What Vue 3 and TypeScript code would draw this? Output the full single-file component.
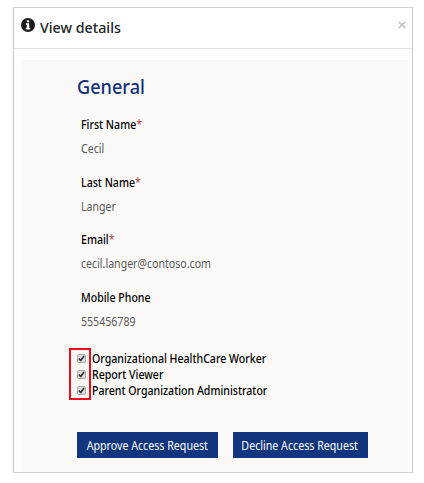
<script setup lang="ts">
import { ref } from 'vue'

interface Field {
  key: string
  label: string
  value: string
  required: boolean
}

const fields: Field[] = [
  { key: 'first', label: 'First Name', value: 'Cecil', required: true },
  { key: 'last', label: 'Last Name', value: 'Langer', required: true },
  { key: 'email', label: 'Email', value: 'cecil.langer@contoso.com', required: true },
  { key: 'phone', label: 'Mobile Phone', value: '555456789', required: false },
]

const roles = ref([
  { key: 'worker', label: 'Organizational HealthCare Worker', checked: true },
  { key: 'viewer', label: 'Report Viewer', checked: true },
  { key: 'admin', label: 'Parent Organization Administrator', checked: true },
])
</script>

<template>
  <div class="dialog">
    <header class="header">
      <svg class="info" viewBox="0 0 14 14" aria-hidden="true">
        <circle cx="7" cy="7" r="7" fill="#1b1b1b" />
        <path d="M5.8 2.2h2.4v2H5.8zM4.9 5.3h3.3v4.5h1v1.6H4.8V9.8h1V6.9h-.9z" fill="#fff" />
      </svg>
      <h1 class="title">View details</h1>
      <button class="close" type="button" aria-label="Close">
        <svg viewBox="0 0 8 8"><path d="M.7.9l6.6 6.2M7.3.9L.7 7.1" stroke="#c6c6c6" stroke-width="1.9" /></svg>
      </button>
    </header>
    <main class="panel">
      <h2 class="heading">General</h2>
      <div v-for="f in fields" :key="f.key" class="field">
        <div class="label">{{ f.label }}<span v-if="f.required" class="star">*</span></div>
        <div class="value">{{ f.value }}</div>
      </div>
      <div class="roles">
        <label v-for="r in roles" :key="r.key" class="role">
          <input v-model="r.checked" class="native" type="checkbox" />
          <span class="box">
            <svg v-if="r.checked" viewBox="0 0 9 9"><path d="M1.9 4.6l1.8 1.9L7 2" fill="none" stroke="#333" stroke-width="1.7" /></svg>
          </span>
          <span class="role-name">{{ r.label }}</span>
        </label>
        <div class="highlight"></div>
      </div>
      <div class="actions">
        <button class="btn approve" type="button"><span class="btn-text">Approve Access Request</span></button>
        <button class="btn decline" type="button"><span class="btn-text">Decline Access Request</span></button>
      </div>
    </main>
  </div>
</template>

<style>
body {
  background: #fff;
}
</style>

<style scoped>
.dialog {
  box-sizing: border-box;
  width: 400px;
  height: 466px;
  margin: 7px 0 0 13px;
  border: 1px solid #c8c8c8;
  border-top-color: #d2d2d2;
  border-bottom-color: #d2d2d2;
  background: #fff;
  font-family: "Noto Sans", "Open Sans", sans-serif;
  font-size: 12px;
  color: #111;
}
.header {
  display: flex;
  box-sizing: border-box;
  height: 41px;
  padding: 10px 6px 0 7px;
  border-bottom: 1px solid #e3e3e3;
}
.info {
  width: 14px;
  height: 14px;
}
.title {
  margin: -1px 0 0 5px;
  font-size: 15px;
  line-height: 20px;
  font-weight: 500;
  color: #222;
  white-space: nowrap;
  transform: scaleX(0.95);
  transform-origin: 0 50%;
}
.close {
  width: 8px;
  height: 8px;
  margin: 2.5px 0 0 auto;
  padding: 0;
  border: 0;
  background: none;
}
.close svg {
  display: block;
  width: 8px;
  height: 8px;
}
.panel {
  box-sizing: border-box;
  height: 412px;
  margin: 11px 4px 0 7px;
  padding: 15px 0 0 55.5px;
  background: #faf9f8;
}
.heading {
  margin: 0 0 12px;
  font-size: 19.5px;
  line-height: 24px;
  font-weight: 500;
  color: #10307a;
  transform: scaleX(0.93);
  transform-origin: 0 50%;
}
.field {
  height: 57.7px;
  padding-left: 4px;
  white-space: nowrap;
}
.label,
.value,
.role-name {
  transform: scaleX(0.882);
  transform-origin: 0 50%;
}
.label {
  height: 25px;
  line-height: 27px;
  font-weight: 500;
  color: #000;
}
.star {
  font-weight: 400;
  color: #b0494c;
}
.value {
  line-height: 25px;
  color: #5a5a5a;
}
.roles {
  position: relative;
  padding-top: 9px;
}
.role {
  display: flex;
  align-items: center;
  height: 15.8px;
  font-weight: 500;
  color: #000;
  white-space: nowrap;
}
.native {
  position: absolute;
  opacity: 0;
  pointer-events: none;
}
.box {
  box-sizing: border-box;
  width: 9px;
  height: 9px;
  margin-right: 6px;
  border: 1px solid #aaa;
  border-radius: 2px;
  background: #e0e0e0;
}
.box svg {
  display: block;
  width: 9px;
  height: 9px;
  margin: -1px;
}
.highlight {
  position: absolute;
  box-sizing: border-box;
  left: -7.5px;
  top: 6px;
  width: 22px;
  height: 52px;
  border: 2px solid #ed0c18;
}
.actions {
  display: flex;
  gap: 15px;
  padding-top: 34px;
}
.btn {
  display: flex;
  align-items: center;
  justify-content: center;
  height: 26px;
  padding: 0;
  border: 0;
  background: #11367d;
  color: #fff;
  font-family: inherit;
  font-size: 12px;
  white-space: nowrap;
}
.btn-text {
  transform: scaleX(0.888);
}
.approve {
  width: 141px;
}
.decline {
  width: 135px;
}
</style>
